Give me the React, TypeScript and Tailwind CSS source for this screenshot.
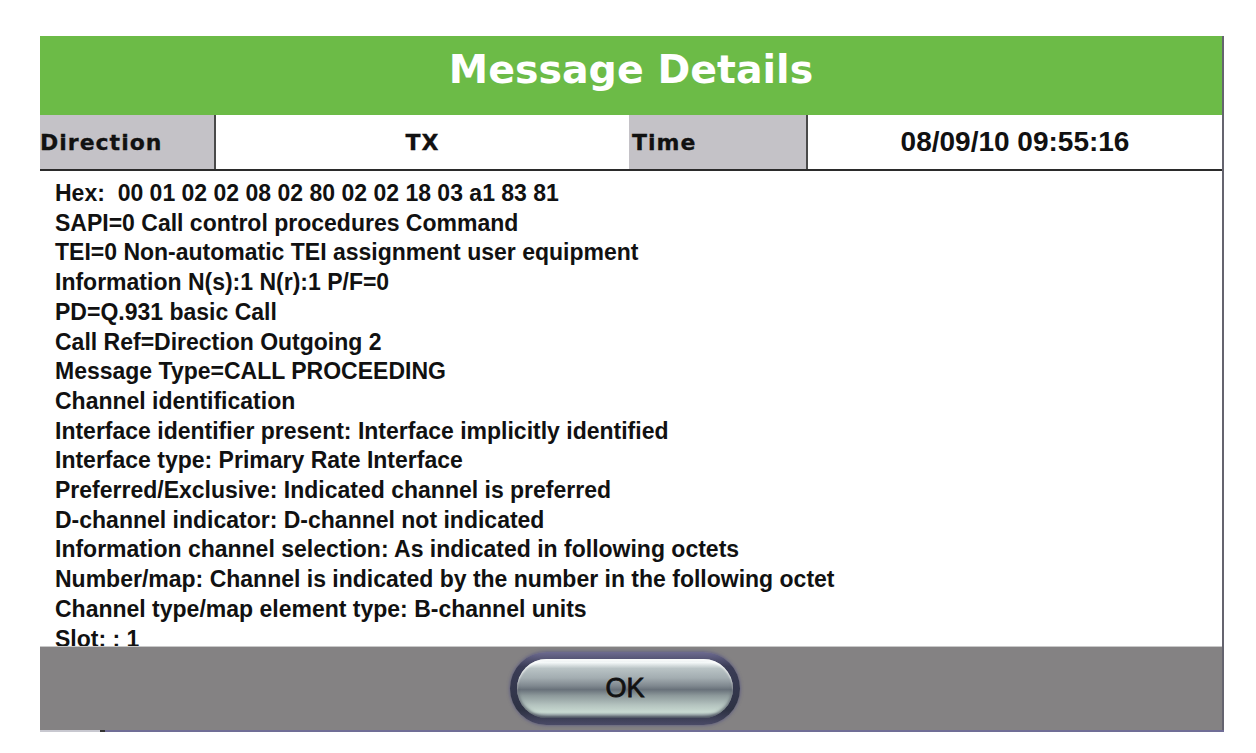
import React from "react";

const lines = [
  "Hex:  00 01 02 02 08 02 80 02 02 18 03 a1 83 81",
  "SAPI=0 Call control procedures Command",
  "TEI=0 Non-automatic TEI assignment user equipment",
  "Information N(s):1 N(r):1 P/F=0",
  "PD=Q.931 basic Call",
  "Call Ref=Direction Outgoing 2",
  "Message Type=CALL PROCEEDING",
  "Channel identification",
  "Interface identifier present: Interface implicitly identified",
  "Interface type: Primary Rate Interface",
  "Preferred/Exclusive: Indicated channel is preferred",
  "D-channel indicator: D-channel not indicated",
  "Information channel selection: As indicated in following octets",
  "Number/map: Channel is indicated by the number in the following octet",
  "Channel type/map element type: B-channel units",
  "Slot: : 1",
];

export default function App() {
  return (
    <div className="w-[1256px] h-[753px] bg-white pt-[36px] pl-[40px] overflow-hidden">
      <div className="w-[1184px] border-r-2 border-[#65646f] flex flex-col">
        <div className="h-[79px] bg-[#6cbb47] text-center pt-[14px]">
          <span className="font-['DejaVu_Sans',sans-serif] font-bold text-[39.5px] leading-[39px] text-white">
            Message Details
          </span>
        </div>
        <div className="h-[56px] flex border-b-2 border-[#2b2b2b] bg-white">
          <div className="w-[176px] bg-[#c4c2c7] border-r-2 border-[#4a4a4a] flex items-center">
            <span className="font-['DejaVu_Sans',sans-serif] font-bold text-[22px] tracking-[1px] text-[#111] [-webkit-text-stroke:0.3px_#111]">
              Direction
            </span>
          </div>
          <div className="w-[413px] flex items-center justify-center">
            <span className="font-['DejaVu_Sans',sans-serif] font-bold text-[22px] tracking-[1px] text-[#111] [-webkit-text-stroke:0.3px_#111]">
              TX
            </span>
          </div>
          <div className="w-[179px] bg-[#c4c2c7] border-r-2 border-[#4a4a4a] flex items-center pl-[3px]">
            <span className="font-['DejaVu_Sans',sans-serif] font-bold text-[22px] tracking-[1px] text-[#111] [-webkit-text-stroke:0.3px_#111]">
              Time
            </span>
          </div>
          <div className="flex-1 flex items-center justify-center">
            <span className="font-['Liberation_Sans',Arial,sans-serif] font-bold text-[28px] text-[#111]">
              08/09/10 09:55:16
            </span>
          </div>
        </div>
        <div className="h-[475px] overflow-hidden bg-white pl-[15px] pt-[8px]">
          {lines.map((l, i) => (
            <div
              key={i}
              className="font-['Liberation_Sans',Arial,sans-serif] font-bold text-[23px] leading-[29.7px] text-[#111] whitespace-pre"
            >
              {l}
            </div>
          ))}
        </div>
        <div className="h-[84px] bg-[#848283] border-t border-[#c9c9c9] flex items-center justify-center">
          <div className="mr-[12px] mt-[-1px] w-[230px] h-[73px] rounded-full p-[7px] bg-[linear-gradient(to_bottom,#6d6b90_0%,#3a3c56_20%,#2e3244_80%,#4a4a66_100%)] shadow-[0_0_3px_1px_rgba(90,88,130,0.7)]">
            <div className="w-full h-full rounded-full bg-[linear-gradient(to_bottom,#dfe6e8_0%,#f4f8f8_6%,#b9c3c5_16%,#a3adb1_32%,#7e878e_46%,#68717a_52%,#8d999b_62%,#b4c3bf_78%,#c8d9d1_90%,#7b8590_100%)] shadow-[inset_0_2px_2px_rgba(255,255,255,0.8),inset_0_-2px_3px_rgba(40,44,60,0.6)] flex items-center justify-center">
              <span className="font-['Liberation_Sans',Arial,sans-serif] text-[27px] leading-none text-[#111] [-webkit-text-stroke:0.8px_#111]">
                OK
              </span>
            </div>
          </div>
        </div>
      </div>
      <div className="w-[1184px] h-[2px] flex">
        <div className="w-[60px] bg-[#c8c8d0]" />
        <div className="w-[5px] bg-[#333]" />
        <div className="flex-1 bg-[#706d96]" />
      </div>
    </div>
  );
}
